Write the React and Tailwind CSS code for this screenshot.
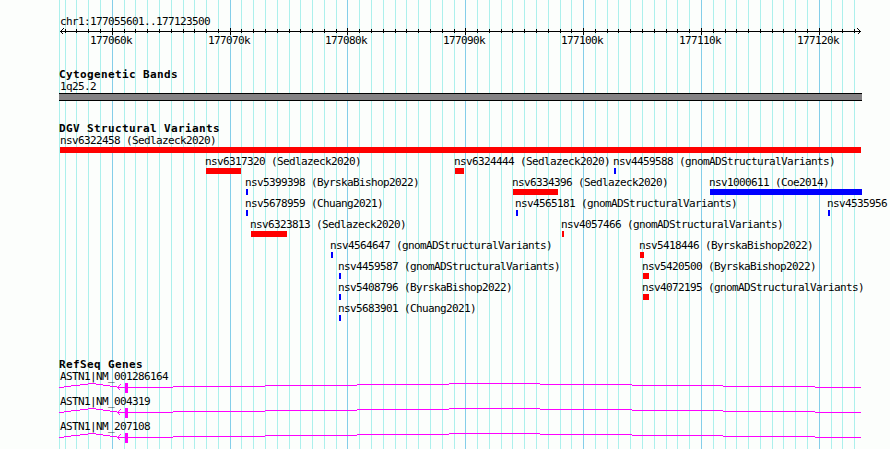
import React from "react";

const REGION_START = 177055601;
const REGION_END = 177123500;
const PAD_LEFT = 60;
const TRACK_WIDTH = 800;

// genomic position -> x on the panel
const toX = (pos) =>
  Math.round(PAD_LEFT + ((pos - REGION_START) * TRACK_WIDTH) / (REGION_END - REGION_START));

const ticks = [];
for (let pos = 177056000; pos <= 177123000; pos += 1000) {
  ticks.push({ pos, x: toX(pos), major: pos % 10000 === 0 });
}

const RED = "bg-[#ff0000]";
const BLUE = "bg-[#0000ff]";

const variantRows = [
  [{ name: "nsv6322458 (Sedlazeck2020)", x: 60, width: 801, color: RED }],
  [
    { name: "nsv6317320 (Sedlazeck2020)", x: 206, width: 35, color: RED },
    { name: "nsv6324444 (Sedlazeck2020)", x: 455, width: 9, color: RED },
    { name: "nsv4459588 (gnomADStructuralVariants)", x: 614, width: 2, color: BLUE },
  ],
  [
    { name: "nsv5399398 (ByrskaBishop2022)", x: 246, width: 2, color: BLUE },
    { name: "nsv6334396 (Sedlazeck2020)", x: 513, width: 45, color: RED },
    { name: "nsv1000611 (Coe2014)", x: 710, width: 152, color: BLUE },
  ],
  [
    { name: "nsv5678959 (Chuang2021)", x: 246, width: 2, color: BLUE },
    { name: "nsv4565181 (gnomADStructuralVariants)", x: 516, width: 2, color: BLUE },
    { name: "nsv4535956", x: 828, width: 2, color: BLUE },
  ],
  [
    { name: "nsv6323813 (Sedlazeck2020)", x: 251, width: 36, color: RED },
    { name: "nsv4057466 (gnomADStructuralVariants)", x: 562, width: 2, color: RED },
  ],
  [
    { name: "nsv4564647 (gnomADStructuralVariants)", x: 331, width: 2, color: BLUE },
    { name: "nsv5418446 (ByrskaBishop2022)", x: 640, width: 4, color: RED },
  ],
  [
    { name: "nsv4459587 (gnomADStructuralVariants)", x: 339, width: 2, color: BLUE },
    { name: "nsv5420500 (ByrskaBishop2022)", x: 643, width: 6, color: RED },
  ],
  [
    { name: "nsv5408796 (ByrskaBishop2022)", x: 339, width: 2, color: BLUE },
    { name: "nsv4072195 (gnomADStructuralVariants)", x: 643, width: 6, color: RED },
  ],
  [{ name: "nsv5683901 (Chuang2021)", x: 339, width: 2, color: BLUE }],
];

const genes = ["ASTN1|NM_001286164", "ASTN1|NM_004319", "ASTN1|NM_207108"];

// [from, to, y] pieces of the intron lines
const intronSteps = [
  [59, 64, 4],
  [64, 71, 3],
  [71, 80, 2],
  [80, 88, 1],
  [88, 96, 0],
  [96, 103, 1],
  [103, 110, 2],
  [110, 117, 3],
  [117, 173, 4],
  [173, 265, 3],
  [265, 357, 2],
  [357, 449, 1],
  [449, 540, 0],
  [540, 632, 1],
  [632, 723, 2],
  [723, 815, 3],
  [815, 861, 4],
];

const GridLines = () => (
  <svg className="absolute inset-0" width="890" height="449" shapeRendering="crispEdges">
    <rect x="59" y="0" width="1" height="449" fill="#acf0ec" />
    {ticks.map((t) => (
      <rect key={t.pos} x={t.x} y="0" width="1" height="449" fill={t.major ? "#84cee9" : "#acf0ec"} />
    ))}
  </svg>
);

const Axis = () => (
  <svg className="block" width="890" height="7" shapeRendering="crispEdges">
    <rect x="60" y="3" width="801" height="1" />
    {ticks.map((t) => (
      <rect key={t.pos} x={t.x} y={t.major ? 0 : 1} width="1" height={t.major ? 7 : 4} />
    ))}
    <path d="M63.5 0.5L60.5 3.5L63.5 6.5M857.5 0.5L860.5 3.5L857.5 6.5" fill="none" stroke="black" />
  </svg>
);

const GeneModel = () => (
  <svg className="block" width="890" height="10" shapeRendering="crispEdges">
    {intronSteps.map(([from, to, y]) => (
      <rect key={from} x={from} y={y} width={to - from} height="1" fill="#ff00ff" />
    ))}
    <path d="M120.5 1.5L117.5 4.5L120.5 7.5" fill="none" stroke="#ff00ff" />
    <rect x="125" y="0" width="3" height="10" fill="#ff00ff" />
  </svg>
);

const TrackTitle = ({ children }) => (
  <h2 className="h-[12px] pl-[59px] text-[11px] leading-[13px] font-bold tracking-[0.378px]">{children}</h2>
);

const Label = ({ children }) => <div className="h-[13px] pl-[60px]">{children}</div>;

const App = () => {
  return (
    <div className="relative h-[449px] w-[890px] overflow-hidden bg-[#fcfefc] font-['DejaVu_Sans_Mono',monospace] text-[11px] leading-[13px] tracking-[-0.622px] whitespace-pre text-black">
      <GridLines />

      <main className="relative pt-[15px]">
        <Label>chr1:177055601..177123500</Label>
        <Axis />
        <div className="relative -mt-px h-[13px]">
          {ticks
            .filter((t) => t.major)
            .map((t) => (
              <span key={t.pos} className="absolute" style={{ left: t.x - 22 }}>
                {t.pos / 1000}k
              </span>
            ))}
        </div>

        <section className="mt-[21px]">
          <TrackTitle>Cytogenetic Bands</TrackTitle>
          <Label>1q25.2</Label>
          <div className="ml-[59px] h-[8px] w-[803px] border-y border-black bg-[#848284]" />
        </section>

        <section className="mt-[21px]">
          <TrackTitle>DGV Structural Variants</TrackTitle>
          {variantRows.map((row, index) => (
            <div key={index} className="relative h-[21px]">
              {row.map((v) => (
                <div key={v.name} className="absolute" style={{ left: v.x }}>
                  <div className={index === 0 ? "h-[13px]" : "-ml-px h-[13px]"}>{v.name}</div>
                  <div className={`h-[6px] ${v.color}`} style={{ width: v.width }} />
                </div>
              ))}
            </div>
          ))}
        </section>

        <section className="mt-[35px]">
          <TrackTitle>RefSeq Genes</TrackTitle>
          {genes.map((gene) => (
            <div key={gene} className="h-[25px]">
              <Label>{gene}</Label>
              <GeneModel />
            </div>
          ))}
        </section>
      </main>
    </div>
  );
};

export default App;
